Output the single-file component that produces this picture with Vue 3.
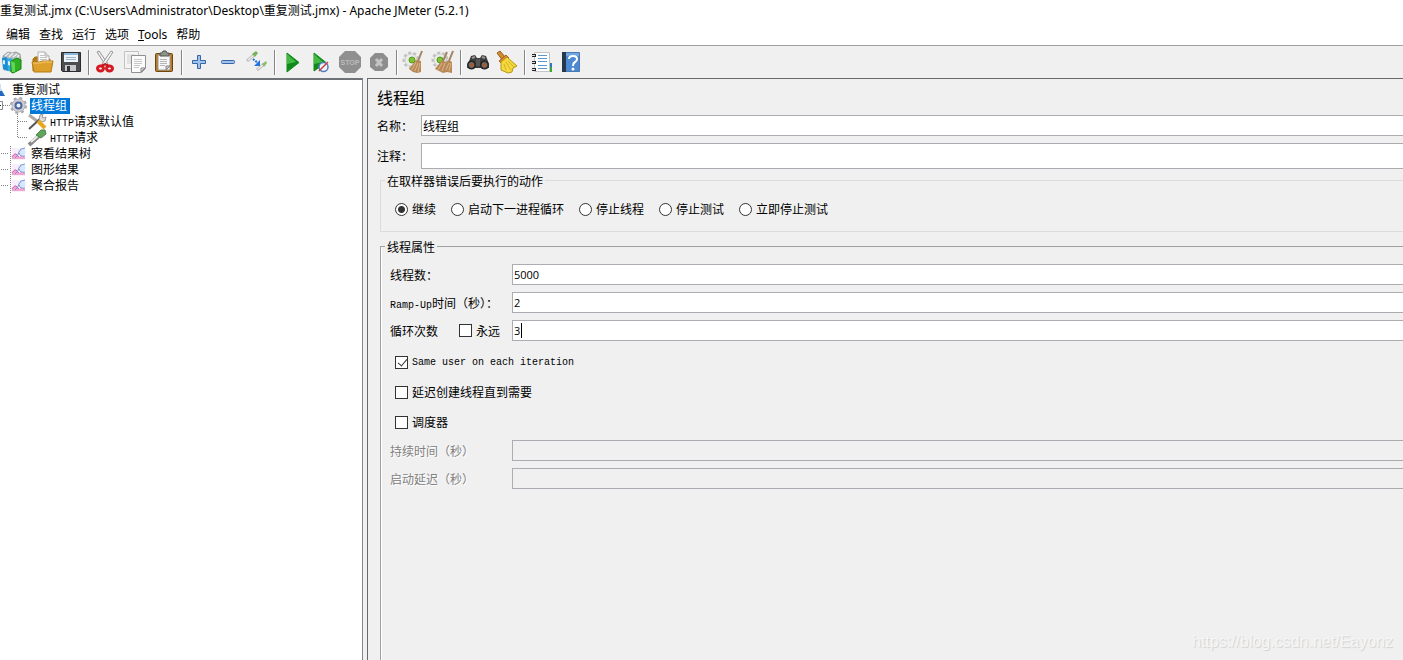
<script setup>
import { ref } from 'vue'

const action = ref('continue')
const actions = [
  { id: 'continue', label: '继续' },
  { id: 'next', label: '启动下一进程循环' },
  { id: 'stopThread', label: '停止线程' },
  { id: 'stopTest', label: '停止测试' },
  { id: 'stopNow', label: '立即停止测试' },
]
const name = ref('线程组')
const comment = ref('')
const threads = ref('5000')
const rampUp = ref('2')
const loops = ref('3')
const forever = ref(false)
const sameUser = ref(true)
const delayed = ref(false)
const scheduler = ref(false)
const listeners = ['察看结果树', '图形结果', '聚合报告']
</script>

<template>
  <div class="window">
    <header class="title">重复测试.jmx (C:\Users\Administrator\Desktop\重复测试.jmx) - Apache JMeter (5.2.1)</header>

    <nav class="menu">
      <button type="button">编辑</button>
      <button type="button">查找</button>
      <button type="button">运行</button>
      <button type="button">选项</button>
      <button type="button"><u>T</u>ools</button>
      <button type="button">帮助</button>
    </nav>

    <div class="toolbar" role="toolbar">
      <button type="button" aria-label="Templates">
        <svg viewBox="0 0 25 25">
          <path d="M3 6 8 2l4 1 4-1 4 2 1 7-4 8-13 1z" fill="#b5babd" stroke="#9aa0a4" />
          <path d="M5 6l4-3M9 7l4-4M13 7l4-3M17 8l2-3" stroke="#eef0f1" stroke-width="1.5" />
          <path d="M2 8l4-1 2 2v12l-5-2z" fill="#1c8ed0" />
          <path d="M7 9l4-1 2 3v11l-5-1z" fill="#35aae8" />
          <path d="M3 10l2 .5v4L3 14zM8 11l2 .5v4L8 15z" fill="#d8f0ff" />
          <path d="M11 11l6-3 4 2v9l-8 4-2-1z" fill="#2faf22" stroke="#188511" />
          <path d="M11 11l4 2v9l-3 0z" fill="#62d653" />
        </svg>
      </button>
      <button type="button" aria-label="Open">
        <svg viewBox="0 0 25 25">
          <path d="M4 21V9l2-2h4l1 2h10v5" fill="#b87c12" stroke="#a1700f" />
          <path d="M9 13V2h7l4 4v8z" fill="#fafafa" stroke="#b0b0b0" />
          <path d="M11 5.500h4M11 7.500h7M11 9.500h7" stroke="#c4c4c4" />
          <path d="M16 2v4h4" fill="#ddd" stroke="#b0b0b0" />
          <path d="M3 12h8l2-1h11l-2 11H5z" fill="#dda02a" stroke="#b57b16" />
          <path d="M4 13h8l2-1h9" fill="none" stroke="#f6ce72" />
        </svg>
      </button>
      <button type="button" aria-label="Save">
        <svg viewBox="0 0 25 25">
          <path d="M3.500 2.500h19v19h-18l-1-1z" fill="#4b4d50" stroke="#292b2d" />
          <path d="M6 3h14v9H6z" fill="#edf5fb" />
          <path d="M6 3h14v2H6z" fill="#8cb8db" />
          <path d="M8 7.500h10M8 9.500h10" stroke="#9bb5c8" />
          <path d="M7 15h11v6H7z" fill="#c6c8ca" />
          <path d="M9 16h3v5H9z" fill="#34373a" />
        </svg>
      </button>
      <i class="sep"></i>
      <button type="button" aria-label="Cut">
        <svg viewBox="0 0 25 25">
          <path d="M4 2l2-1 9 13-2 2z" fill="#f0f0f0" stroke="#959595" />
          <path d="M20 2l-2-1-9 13 2 2z" fill="#f8f8f8" stroke="#959595" />
          <ellipse cx="7.500" cy="18.500" rx="3" ry="2.500" fill="none" stroke="#d41b24" stroke-width="3" />
          <ellipse cx="16.500" cy="18.500" rx="3" ry="2.500" fill="none" stroke="#d41b24" stroke-width="3" />
          <path d="M8 16l4-2 4 2" fill="none" stroke="#c9151d" stroke-width="2" />
        </svg>
      </button>
      <button type="button" aria-label="Copy">
        <svg viewBox="0 0 25 25">
          <path d="M2.500 1.500h14v17h-14z" fill="#f4f4f4" stroke="#c2c2c2" />
          <path d="M5 5h8M5 7h5M5 9h4M5 11h4M5 13h4" stroke="#d0d0d0" />
          <path d="M9.500 5.500h14v13l-4 4h-10z" fill="#fbfbfb" stroke="#909090" />
          <path d="M12 9.500h8M12 11.500h8M12 13.500h8M12 15.500h6M12 17.500h5" stroke="#c8c8c8" />
          <path d="M23 18l-4 4v-4z" fill="#ddd" stroke="#888" />
        </svg>
      </button>
      <button type="button" aria-label="Paste">
        <svg viewBox="0 0 25 25">
          <rect x="4.500" y="3.500" width="17" height="18" rx="1" fill="#b87a20" stroke="#70450b" />
          <path d="M7 5h12v15H7z" fill="#f7f7f7" stroke="#999" />
          <path d="M9 5V3h2l1-2h3l1 2h2v3H9z" fill="#8d938c" stroke="#4f564e" />
          <path d="M9 9.500h7M9 11.500h7M9 13.500h7M9 15.500h5" stroke="#b5b5b5" />
          <path d="M19 16l-4 4v-4z" fill="#ccc" stroke="#888" />
        </svg>
      </button>
      <i class="sep"></i>
      <button type="button" aria-label="Expand all">
        <svg viewBox="0 0 25 25">
          <path d="M11.500 5.500h3v5h5v3h-5v5h-3v-5h-5v-3h5z" fill="#9fc3eb" stroke="#3565a8" stroke-linejoin="round" />
        </svg>
      </button>
      <button type="button" aria-label="Collapse all">
        <svg viewBox="0 0 25 25">
          <rect x="6.500" y="10.500" width="13" height="3" rx="1" fill="#9fc3eb" stroke="#3565a8" />
        </svg>
      </button>
      <button type="button" aria-label="Toggle">
        <svg viewBox="0 0 25 25">
          <path d="M3 11l7-6" stroke="#c4c4c4" stroke-width="3" /><path d="M4 10l6-5" stroke="#fff" />
          <path d="M8 4l4-3 2 2-3 4z" fill="#78b15b" />
          <path d="M13 20l7-6" stroke="#c4c4c4" stroke-width="3" /><path d="M14 19l6-5" stroke="#fff" />
          <path d="M18 14l4-3 1 2-3 4z" fill="#8abd6a" />
          <path d="M9 9l5 4" stroke="#2673df" stroke-width="2" stroke-dasharray="2 1" />
          <path d="M16 10v6h-6z" fill="#2673df" />
        </svg>
      </button>
      <i class="sep"></i>
      <button type="button" aria-label="Start">
        <svg viewBox="0 0 25 25">
          <path d="M8 3l12 9.500L8 22z" fill="#108a1a" stroke="#128a1b" />
          <path d="M8 4l9 8-9 2z" fill="#45b945" />
        </svg>
      </button>
      <button type="button" aria-label="Start no pauses">
        <svg viewBox="0 0 25 25">
          <path d="M6 3l12 9.500L6 21z" fill="#108a1a" stroke="#128a1b" />
          <path d="M6 4l9 8-9 2z" fill="#45b945" />
          <circle cx="15.500" cy="17" r="4.500" fill="#eef3f9" stroke="#507fbd" stroke-width="1.500" />
          <path d="M11 21l9-9" stroke="#d13a3a" stroke-width="1.500" />
        </svg>
      </button>
      <button type="button" aria-label="Stop" disabled>
        <svg viewBox="0 0 25 25">
          <path d="M8 1h10l6 6v10l-6 6H8l-6-6V7z" fill="#8f8f8f" />
          <text x="13" y="15" text-anchor="middle" class="stop-text">STOP</text>
        </svg>
      </button>
      <button type="button" aria-label="Shutdown" disabled>
        <svg viewBox="0 0 25 25">
          <path d="M9 3h8l5 5v9l-5 4H9l-5-4V8z" fill="#8d8d8d" />
          <path d="M10 9l6 7M16 9l-6 7" stroke="#c4c4c4" stroke-width="3" />
        </svg>
      </button>
      <i class="sep"></i>
      <button type="button" aria-label="Clear">
        <svg viewBox="0 0 25 25">
          <circle cx="10" cy="10" r="7" fill="none" stroke="#c2c2c2" stroke-width="3" stroke-dasharray="3 2" />
          <circle cx="10" cy="10" r="6" fill="#ececec" stroke="#cfcfcf" />
          <circle cx="11" cy="10" r="3" fill="#7fc72d" stroke="#4f991d" />
          <path d="M21 1l-4 10" stroke="#a38560" stroke-width="2" />
          <path d="M15 10l5 1 0 11-4 1-4-1-4-3z" fill="#b88856" />
          <path d="M15 12l-4 8M17 13l-3 8M19 13l-2 9" stroke="#dcb78b" />
        </svg>
      </button>
      <button type="button" aria-label="Clear all">
        <svg viewBox="0 0 25 25">
          <circle cx="10" cy="10" r="7" fill="none" stroke="#c2c2c2" stroke-width="3" stroke-dasharray="3 2" />
          <circle cx="10" cy="10" r="6" fill="#ececec" stroke="#cfcfcf" />
          <circle cx="10" cy="10" r="3" fill="#7fc72d" stroke="#4f991d" />
          <path d="M17 2l-4 9M23 1l-4 10" stroke="#a38560" stroke-width="2" />
          <path d="M12 10l4 2 3-2 3 2 0 11-5-1-4 1-8-4z" fill="#b88856" />
          <path d="M12 13l-4 7M15 13l-3 8M19 13l-3 7M21 13l-2 8" stroke="#dcb78b" />
        </svg>
      </button>
      <i class="sep"></i>
      <button type="button" aria-label="Search">
        <svg viewBox="0 0 25 25">
          <path d="M3 14l3-8 4-1 2 3h3l2-3 4 1 3 8v4H2z" fill="#3c3c3c" />
          <path d="M7 8l3-1M17 7l3 1" stroke="#969696" stroke-width="2" />
          <circle cx="6.500" cy="15" r="4.500" fill="#252525" />
          <circle cx="19.500" cy="15" r="4.500" fill="#252525" />
          <circle cx="6.500" cy="15" r="2.500" fill="#a35a32" stroke="#707070" />
          <circle cx="19.500" cy="15" r="2.500" fill="#a35a32" stroke="#707070" />
          <path d="M11 9h4v7h-4z" fill="#555" />
        </svg>
      </button>
      <button type="button" aria-label="Reset search">
        <svg viewBox="0 0 25 25">
          <path d="M3 3l3-2 6 7-3 3z" fill="#d18d35" stroke="#9a5e17" />
          <path d="M5 11l7-6 3 3-7 6z" fill="#d98a32" stroke="#b0601c" />
          <path d="M7 12l6-5 10 9-4 2-1 4-4 1-7-3z" fill="#f4d83d" stroke="#b79715" />
          <path d="M10 14l2 6M12 12l5 8M14 11l6 6" stroke="#d1b32a" />
        </svg>
      </button>
      <i class="sep"></i>
      <button type="button" aria-label="Function helper">
        <svg viewBox="0 0 25 25">
          <path d="M18 13h5v4h-5z" fill="#2b76d0" /><path d="M18 17h5v5h-5z" fill="#39a936" />
          <path d="M5.500 2.500h15v19h-15z" fill="#fff" stroke="#c4c4c4" />
          <path d="M9 5.500h9M9 8.500h9M9 11.500h9M9 15.500h9M9 18.500h9" stroke="#5d97cc" />
          <path d="M3 5.500h4M3 12.500h4M3 19.500h4" stroke="#252525" stroke-width="3" />
          <path d="M2 5.500h4M2 12.500h4M2 19.500h4" stroke="#ddd" />
        </svg>
      </button>
      <button type="button" aria-label="Help">
        <svg viewBox="0 0 25 25">
          <path d="M4.500 2.500h17v19h-17z" fill="#4c89d2" stroke="#4a78af" />
          <path d="M4 2h4v20H4z" fill="#26384c" />
          <path d="M8 3h13v3H8z" fill="#70a6e2" />
          <path d="M11 9q0-3 4-3t4 3q0 2-2 3t-2 4" fill="none" stroke="#fff" stroke-width="2" />
          <circle cx="15" cy="19" r="1.500" fill="#fff" />
        </svg>
      </button>
    </div>

    <div class="body">
      <aside class="tree" role="tree">
        <div class="node" role="treeitem">
          <svg class="w11" viewBox="0 0 11 16">
            <path d="M0 2h1v5l4 7H0z" fill="#2469bd" /><path d="M0 2h1v5l1 2H0z" fill="#cfe0f5" />
          </svg>
          <span>重复测试</span>
        </div>
        <div class="node" role="treeitem" aria-selected="true">
          <svg class="w30" viewBox="0 0 30 16">
            <path d="M-5.500 3.500h8v8h-8z" fill="#fff" stroke="#888" /><path d="M0 7.500h1" stroke="#222" />
            <path d="M3 7.500h7" class="dots" />
            <circle cx="18.500" cy="7.500" r="7.500" fill="none" stroke="#a9a9ae" stroke-width="2" stroke-dasharray="3 3" />
            <circle cx="18.500" cy="7.500" r="6.500" fill="#cfcfd4" stroke="#b0b0b6" />
            <circle cx="18.500" cy="7.500" r="3" fill="#e9f1fc" stroke="#4a68a0" stroke-width="2" />
          </svg>
          <span class="selected">线程组</span>
        </div>
        <div class="node" role="treeitem">
          <svg class="w49" viewBox="0 0 49 16">
            <path d="M17.500 0v16M18 7.500h10" class="dots" />
            <path d="M29 1l8 6" stroke="#aaa" stroke-width="3" />
            <path d="M29 15l12-11" stroke="#555" stroke-width="2" />
            <path d="M39 5l1-4 3-1-1 3 2 1 2-1-1 4-4 1z" fill="#ddd" stroke="#999" />
            <path d="M38 7l7 7" stroke="#e9a823" stroke-width="4" />
          </svg>
          <span><span class="latin">HTTP</span>请求默认值</span>
        </div>
        <div class="node" role="treeitem">
          <svg class="w49" viewBox="0 0 49 16">
            <path d="M17.500 0v8M18 7.500h10" class="dots" />
            <path d="M29 15l10-9" stroke="#888" stroke-width="4" />
            <path d="M31 12l8-7" stroke="#eee" stroke-width="2" />
            <path d="M36 5l5-5 4 0 1 4-5 4z" fill="#63a45c" stroke="#4c8548" />
          </svg>
          <span><span class="latin">HTTP</span>请求</span>
        </div>
        <div v-for="item in listeners" :key="item" class="node" role="treeitem">
          <svg class="w30" viewBox="0 0 30 16">
            <path d="M10.500 0v16M1 7.500h8" class="dots" />
            <path d="M12 2h13v12H12z" fill="#f8eefa" />
            <path d="M12 13v-2q3-5 5-2l2 2q3-2 6 0v2z" fill="#f2a6d4" />
            <path d="M12 11q3-5 5-2l2 2" stroke="#d45aa6" />
            <circle cx="22" cy="6" r="3.500" fill="#d8e7fb" />
            <path d="M25 2q-5 0-6 4-1 4-4 6M19 7q1 4 6 3" stroke="#7597d6" />
          </svg>
          <span>{{ item }}</span>
        </div>
      </aside>

      <main class="panel">
        <h1>线程组</h1>
        <div class="field">
          <label for="name">名称：</label>
          <input id="name" v-model="name" type="text" />
        </div>
        <div class="field comment">
          <label for="comment">注释：</label>
          <input id="comment" v-model="comment" type="text" />
        </div>

        <fieldset class="actions">
          <legend>在取样器错误后要执行的动作</legend>
          <div class="options">
            <label v-for="a in actions" :key="a.id" class="choice">
              <input v-model="action" type="radio" name="action" :value="a.id" /><span>{{ a.label }}</span>
            </label>
          </div>
        </fieldset>

        <fieldset class="props">
          <legend>线程属性</legend>
          <div class="prop">
            <label for="threads">线程数：</label>
            <input id="threads" v-model="threads" type="text" />
          </div>
          <div class="prop">
            <label for="ramp"><span class="latin">Ramp-Up</span>时间（秒）：</label>
            <input id="ramp" v-model="rampUp" type="text" />
          </div>
          <div class="prop">
            <div class="loop">
              <label for="loops">循环次数</label>
              <label class="choice"><input v-model="forever" type="checkbox" /><span>永远</span></label>
            </div>
            <div class="box">
              <input id="loops" v-model="loops" type="text" />
              <i class="caret"></i>
            </div>
          </div>
          <div class="checks">
            <label class="choice"><input v-model="sameUser" type="checkbox" /><span class="latin">Same user on each iteration</span></label>
            <label class="choice"><input v-model="delayed" type="checkbox" /><span>延迟创建线程直到需要</span></label>
            <label class="choice"><input v-model="scheduler" type="checkbox" /><span>调度器</span></label>
          </div>
          <div class="prop off">
            <label for="duration">持续时间（秒）</label>
            <input id="duration" type="text" disabled />
          </div>
          <div class="prop off">
            <label for="delay">启动延迟（秒）</label>
            <input id="delay" type="text" disabled />
          </div>
        </fieldset>
      </main>
    </div>
    <div class="watermark">https://blog.csdn.net/Eayonz</div>
  </div>
</template>

<style>
body {
  margin: 0;
}
</style>

<style scoped>
* {
  box-sizing: border-box;
}
.window {
  position: relative;
  display: flex;
  flex-direction: column;
  height: 100vh;
  overflow: hidden;
  background: #f0f0f0;
  color: #000;
  font: 12px/16px "Liberation Sans", "Noto Sans CJK SC", sans-serif;
}
.title {
  height: 25px;
  padding-top: 3px;
  background: #fff;
  white-space: nowrap;
  font-family: "Noto Sans", "Noto Sans CJK SC", sans-serif;
}
.menu {
  display: flex;
  gap: 9px;
  height: 21px;
  padding: 0 6px;
  background: #fff;
  border-bottom: 1px solid #a0a0a0;
}
button {
  padding: 0;
  border: 0;
  background: none;
  color: inherit;
  font: inherit;
}
.menu button {
  font-family: "Noto Sans", "Noto Sans CJK SC", sans-serif;
}
.toolbar {
  display: flex;
  align-items: center;
  height: 32px;
  margin-left: -2px;
}
.toolbar button {
  flex: none;
  width: 29px;
  height: 25px;
  padding: 0 2px;
}
.toolbar svg {
  display: block;
  width: 25px;
  height: 25px;
  fill: none;
}
.stop-text {
  font: bold 7px "Liberation Sans", sans-serif;
  fill: #bdbdbd;
}
.sep {
  flex: none;
  width: 2px;
  height: 25px;
  margin: 0 1px 0 3px;
  border-left: 1px solid #858585;
  border-right: 1px solid #fff;
}
.body {
  display: flex;
  flex: 1;
  gap: 4px;
  min-height: 0;
}
.tree {
  flex: none;
  width: 363px;
  padding-top: 2px;
  background: #fff;
  border-top: 2px solid #6f7278;
  border-right: 1px solid #82878f;
}
.node {
  display: flex;
  height: 16px;
  white-space: nowrap;
}
.node svg {
  flex: none;
  height: 16px;
  overflow: visible;
  fill: none;
}
.node > span {
  padding: 0 3px 0 1px;
}
.w11 {
  width: 11px;
}
.w30 {
  width: 30px;
}
.w49 {
  width: 49px;
}
.dots {
  stroke: #808080;
  stroke-dasharray: 1 1;
}
.node > .selected {
  background: #0078d7;
  color: #fff;
}
.latin {
  font: 10px/12px "Liberation Mono", monospace;
}
.panel {
  flex: 1;
  display: flex;
  flex-direction: column;
  min-width: 0;
  padding: 8px 0 0 9px;
  border-top: 1px solid #696969;
  border-left: 1px solid #696969;
}
h1 {
  margin: 0 0 4px;
  font-size: 16px;
  line-height: 24px;
  font-weight: 400;
}
.field {
  display: grid;
  grid-template-columns: 44px 1fr;
  align-items: center;
  height: 21px;
  margin-bottom: 7px;
}
.field.comment {
  height: 26px;
  margin-bottom: 1px;
}
.field label,
.prop > label,
.loop > label:first-child,
.choice span {
  padding-top: 2px;
}
input[type="text"] {
  width: 100%;
  height: 100%;
  margin: 0;
  padding: 0 1px;
  border: 1px solid #abadb3;
  border-right: 0;
  border-radius: 0;
  outline: 0;
  background: #fff;
  color: #000;
  font: 12px/16px "Noto Sans CJK SC", sans-serif;
}
.props input[type="text"] {
  font: 11px/16px "Open Sans", sans-serif;
}
.props input[type="text"]:disabled {
  background: #f0f0f0;
}
fieldset {
  min-width: 0;
  margin: 0 0 0 3px;
  padding: 0;
  border: 1px solid #dcdcdc;
  border-right: 0;
}
legend {
  margin-left: 4px;
  padding: 5px 2px 0;
  line-height: 15px;
}
.actions {
  height: 62px;
}
.options {
  display: flex;
  gap: 15px;
  padding: 10px 14px 0;
}
.choice {
  display: flex;
  align-items: center;
  height: 18px;
  white-space: nowrap;
}
input[type="radio"],
input[type="checkbox"] {
  appearance: none;
  flex: none;
  width: 13px;
  height: 13px;
  margin: 0 4px 0 0;
  border: 1px solid #333;
  background: #fff;
}
input[type="radio"] {
  border-radius: 50%;
}
input[type="radio"]:checked {
  background: radial-gradient(circle, #333 0 3px, #fff 4px);
}
input[type="checkbox"]:checked::after {
  content: "";
  display: block;
  width: 4px;
  height: 8px;
  margin: 0 0 0 4px;
  border: solid #333;
  border-width: 0 1px 1px 0;
  transform: rotate(40deg);
}
.props {
  flex: 1;
  margin-top: 4px;
  padding-top: 1px;
  border-color: #a0a0a0;
  border-bottom: 0;
  box-shadow: inset 1px 0 #fff;
}
.prop {
  display: grid;
  grid-template-columns: 122px 1fr;
  align-items: center;
  height: 21px;
  margin: 7px 0 0 9px;
  white-space: nowrap;
}
.loop {
  display: flex;
  gap: 21px;
  align-items: center;
}
.box {
  position: relative;
  height: 100%;
}
.caret {
  position: absolute;
  left: 9px;
  top: 3px;
  width: 1px;
  height: 15px;
  background: #000;
}
.checks {
  display: grid;
  gap: 12px;
  margin: 12px 14px 9px;
}
.off label {
  color: #808080;
  text-shadow: 1px 1px #fff;
}
.watermark {
  position: absolute;
  right: 10px;
  bottom: 8px;
  color: #f6f6f6;
  font: 16px/20px "Liberation Sans", sans-serif;
  text-shadow: 1px 1px 1px #d0d0d0;
}
</style>
